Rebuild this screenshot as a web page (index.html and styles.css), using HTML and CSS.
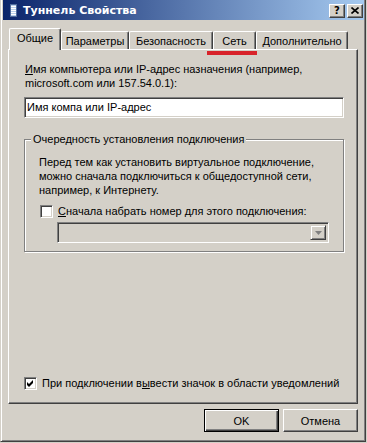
FILE: index.html
```html
<!DOCTYPE html>
<html lang="ru">
<head>
<meta charset="utf-8">
<title>Туннель Свойства</title>
<link rel="stylesheet" href="styles.css">
</head>
<body>
<div class="window">
  <div class="titlebar">
    <svg class="ticon" width="7" height="13" viewBox="0 0 7 13">
      <rect x="0.5" y="0.5" width="6" height="12" fill="#b8d0ec" stroke="#506c9c"/>
      <rect x="1" y="2" width="5" height="1" fill="#ffffff"/>
      <rect x="1" y="4" width="5" height="1" fill="#ffffff"/>
      <rect x="1" y="6" width="5" height="1" fill="#ffffff"/>
      <rect x="1" y="8" width="5" height="1" fill="#ffffff"/>
      <rect x="1" y="10" width="5" height="1" fill="#ffffff"/>
    </svg>
    <span class="title">Туннель Свойства</span>
    <div class="tbtns">
      <div class="tbtn q">?</div>
      <div class="tbtn">
        <svg width="8" height="7" viewBox="0 0 8 7"><path d="M0.5 0.5 L7.5 6.5 M7.5 0.5 L0.5 6.5" stroke="#000" stroke-width="1.6"/></svg>
      </div>
    </div>
  </div>
  <div class="content">
    <div class="tabs">
      <div class="tab sel">Общие</div>
      <div class="tab w-params">Параметры</div>
      <div class="tab w-sec">Безопасность</div>
      <div class="tab w-net">Сеть</div>
      <div class="tab w-adv">Дополнительно</div>
      <div class="mark"></div>
    </div>
    <div class="panel">
      <div class="lbl"><u>И</u>мя компьютера или IP-адрес назначения (например,<br>microsoft.com или 157.54.0.1):</div>
      <div class="input">Имя компа или IP-адрес</div>
      <fieldset class="group">
        <legend>Очередность установления подключения</legend>
        <div class="ginner">
          <p class="desc">Перед тем как установить виртуальное подключение,<br>можно сначала подключиться к общедоступной сети,<br>например, к Интернету.</p>
          <div class="check first">
            <span class="box"></span>
            <span><u>С</u>начала набрать номер для этого подключения:</span>
          </div>
          <div class="combo">
            <span class="cbtn">
              <svg width="7" height="4" viewBox="0 0 7 4"><path d="M0 0 H7 L3.5 4 Z" fill="#808080"/></svg>
            </span>
          </div>
        </div>
      </fieldset>
      <div class="check bottom">
        <span class="box">
          <svg width="7" height="7" viewBox="0 0 7 7"><path d="M0 2 L2 4 L6 0 L6 3 L2 7 L0 5 Z" fill="#000"/></svg>
        </span>
        <span>При подключении в<u>ы</u>вести значок в области уведомлений</span>
      </div>
    </div>
    <div class="buttons">
      <div class="btn def">OK</div>
      <div class="btn">Отмена</div>
    </div>
  </div>
</div>
</body>
</html>
```

FILE: styles.css
```css
* { box-sizing: border-box; }
html, body { margin: 0; padding: 0; }
body {
  width: 367px;
  height: 443px;
  overflow: hidden;
  background: #d4d0c8;
  font-family: "Liberation Sans", Arial, sans-serif;
  font-size: 11px;
  color: #000;
}
.window {
  width: 366px;
  height: 442px;
  border-left: 1px solid #d4d0c8;
  border-right: 1px solid #404040;
  border-bottom: 1px solid #404040;
  box-shadow: inset 1px 0 #ffffff, inset -1px -1px #808080;
  padding: 0 1px 0 2px;
}
.titlebar {
  height: 20px;
  display: flex;
  align-items: center;
  padding: 0 1px 0 7px;
  background: linear-gradient(90deg, #0a246a, #a6caf0);
}
.ticon { display: block; margin-right: 6px; }
.title {
  color: #fff;
  font-family: "DejaVu Sans", Verdana, sans-serif;
  font-weight: bold;
  font-size: 11px;
  letter-spacing: 0;
  flex: 1;
}
.tbtns { display: flex; gap: 2px; padding-top: 1px; }
.tbtn {
  width: 16px;
  height: 14px;
  background: #d4d0c8;
  border-top: 1px solid #fff;
  border-left: 1px solid #fff;
  border-right: 1px solid #404040;
  border-bottom: 1px solid #404040;
  box-shadow: inset -1px -1px #808080;
  display: flex;
  align-items: center;
  justify-content: center;
}
.tbtn.q {
  font-family: "DejaVu Sans", Verdana, sans-serif;
  font-weight: bold;
  font-size: 10px;
  line-height: 1;
}
.content { padding: 8px 6px 0 5px; }
.tabs {
  position: relative;
  display: flex;
  align-items: flex-end;
  height: 21px;
  padding-left: 1px;
}
.tab {
  height: 18px;
  border-top: 1px solid #fff;
  border-left: 1px solid #fff;
  border-right: 1px solid #404040;
  box-shadow: inset -1px 0 #808080;
  border-radius: 2px 2px 0 0;
  display: flex;
  align-items: center;
  justify-content: center;
  white-space: nowrap;
  background: #d4d0c8;
}
.tab.sel {
  position: relative;
  z-index: 2;
  width: 52px;
  height: 22px;
  margin-bottom: -1px;
  padding-bottom: 3px;
}
.w-params { width: 68px; }
.w-sec { width: 84px; }
.w-net { width: 43px; }
.w-adv { width: 92px; }
.mark {
  position: absolute;
  left: 199px;
  top: 23px;
  width: 50px;
  height: 4px;
  background: #d8232a;
  z-index: 3;
}
.panel {
  height: 355px;
  border-top: 1px solid #fff;
  border-left: 1px solid #fff;
  border-right: 1px solid #404040;
  border-bottom: 1px solid #404040;
  box-shadow: inset -1px -1px #808080;
  padding: 12px 11px 13px 15px;
  display: flex;
  flex-direction: column;
}
.lbl { line-height: 14px; padding-left: 1px; }
.input {
  margin-top: 7px;
  width: 320px;
  height: 21px;
  background: #fff;
  border-top: 1px solid #808080;
  border-left: 1px solid #808080;
  border-right: 1px solid #fff;
  border-bottom: 1px solid #fff;
  box-shadow: inset 1px 1px #404040, inset -1px -1px #d4d0c8;
  padding-left: 2px;
  line-height: 19px;
}
.group {
  margin: 14px 0 0 0;
  width: 320px;
  border: 1px solid #808080;
  box-shadow: inset 1px 1px #fff, 1px 1px #fff;
  padding: 9px 8px 8px 6px;
  min-width: 0;
}
.group legend {
  padding: 0 2px;
  line-height: 14px;
  background: #d4d0c8;
}
.ginner { padding-left: 8px; }
.desc { margin: 0; line-height: 14px; }
.check {
  display: flex;
  align-items: center;
  gap: 5px;
  height: 14px;
  white-space: nowrap;
}
.check.first { margin-top: 7px; padding-left: 1px; }
.check.bottom { margin-top: auto; }
.box {
  width: 13px;
  height: 13px;
  flex: none;
  background: #fff;
  border-top: 1px solid #808080;
  border-left: 1px solid #808080;
  border-right: 1px solid #fff;
  border-bottom: 1px solid #fff;
  box-shadow: inset 1px 1px #404040, inset -1px -1px #d4d0c8;
  display: flex;
  align-items: center;
  justify-content: center;
}
.combo {
  margin: 4px 0 0 18px;
  width: 272px;
  height: 21px;
  background: #d4d0c8;
  border-top: 1px solid #808080;
  border-left: 1px solid #808080;
  border-right: 1px solid #fff;
  border-bottom: 1px solid #fff;
  box-shadow: inset 1px 1px #404040, inset -1px -1px #d4d0c8;
  display: flex;
  justify-content: flex-end;
  padding: 2px;
}
.cbtn {
  width: 16px;
  height: 15px;
  border-top: 1px solid #d4d0c8;
  border-left: 1px solid #d4d0c8;
  border-right: 1px solid #404040;
  border-bottom: 1px solid #404040;
  box-shadow: inset 1px 1px #fff, inset -1px -1px #808080;
  display: flex;
  align-items: center;
  justify-content: center;
}
.buttons {
  display: flex;
  justify-content: flex-end;
  gap: 4px;
  margin-top: 5px;
}
.btn {
  width: 75px;
  height: 23px;
  border-top: 1px solid #fff;
  border-left: 1px solid #fff;
  border-right: 1px solid #404040;
  border-bottom: 1px solid #404040;
  box-shadow: inset -1px -1px #808080;
  display: flex;
  align-items: center;
  justify-content: center;
}
.btn.def {
  border: 1px solid #000;
  box-shadow: inset 1px 1px #fff, inset -1px -1px #404040, inset -2px -2px #808080;
}
```
